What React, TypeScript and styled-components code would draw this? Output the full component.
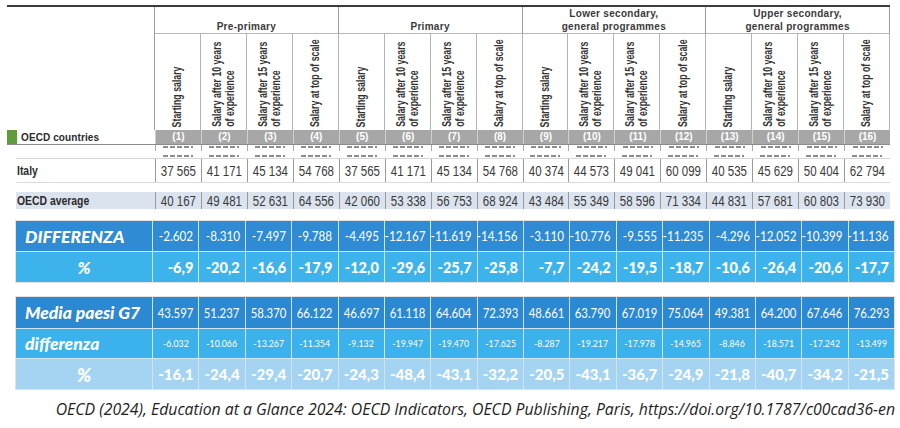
import styled, { createGlobalStyle } from "styled-components";

const GlobalStyle = createGlobalStyle`
  html, body {
    margin: 0;
    padding: 0;
    background: #ffffff;
  }
  body {
    width: 900px;
    height: 428px;
    overflow: hidden;
    font-family: "Liberation Sans", Arial, sans-serif;
  }
`;

const HEAD_COLS = "148px repeat(16, minmax(0, 1fr))";
const BODY_COLS = "139px repeat(16, minmax(0, 1fr))";

const groups = [
  "Pre-primary",
  "Primary",
  "Lower secondary,\ngeneral programmes",
  "Upper secondary,\ngeneral programmes",
];

const subHeads = [
  "Starting salary",
  "Salary after 10 years\nof experience",
  "Salary after 15 years\nof experience",
  "Salary at top of scale",
];

const italy = ["37 565", "41 171", "45 134", "54 768", "37 565", "41 171", "45 134", "54 768", "40 374", "44 573", "49 041", "60 099", "40 535", "45 629", "50 404", "62 794"];
const oecd = ["40 167", "49 481", "52 631", "64 556", "42 060", "53 338", "56 753", "68 924", "43 484", "55 349", "58 596", "71 334", "44 831", "57 681", "60 803", "73 930"];

const diff = ["-2.602", "-8.310", "-7.497", "-9.788", "-4.495", "-12.167", "-11.619", "-14.156", "-3.110", "-10.776", "-9.555", "-11.235", "-4.296", "-12.052", "-10.399", "-11.136"];
const diffPct = ["-6,9", "-20,2", "-16,6", "-17,9", "-12,0", "-29,6", "-25,7", "-25,8", "-7,7", "-24,2", "-19,5", "-18,7", "-10,6", "-26,4", "-20,6", "-17,7"];
const g7 = ["43.597", "51.237", "58.370", "66.122", "46.697", "61.118", "64.604", "72.393", "48.661", "63.790", "67.019", "75.064", "49.381", "64.200", "67.646", "76.293"];
const g7Diff = ["-6.032", "-10.066", "-13.267", "-11.354", "-9.132", "-19.947", "-19.470", "-17.625", "-8.287", "-19.217", "-17.978", "-14.965", "-8.846", "-18.571", "-17.242", "-13.499"];
const g7Pct = ["-16,1", "-24,4", "-29,4", "-20,7", "-24,3", "-48,4", "-43,1", "-32,2", "-20,5", "-43,1", "-36,7", "-24,9", "-21,8", "-40,7", "-34,2", "-21,5"];

const Page = styled.div`
  width: 900px;
  height: 428px;
  padding-top: 5px;
  box-sizing: border-box;
  display: flex;
  flex-direction: column;
`;

/* narrow type: the source table uses a condensed face we don't have */
const Squeeze = styled.span<{ $s: number; $o?: string }>`
  display: inline-block;
  white-space: nowrap;
  transform: scaleX(${(p) => p.$s});
  transform-origin: ${(p) => p.$o ?? "center"};
`;

/* ---------- OECD table ---------- */

const Table = styled.div`
  width: 883px;
  margin-left: 7px;
  border-top: 2px solid #3c3c3c;
`;

const HeadGrid = styled.div`
  display: grid;
  grid-template-columns: ${HEAD_COLS};
  grid-template-rows: 27px 96px;
`;

const Corner = styled.div`
  grid-row: 1 / 3;
  border-right: 1px solid #9c9c9c;
`;

const GroupCell = styled.div`
  grid-column: span 4;
  display: flex;
  align-items: flex-end;
  justify-content: center;
  white-space: pre-line;
  text-align: center;
  border-right: 1px solid #9c9c9c;
  border-bottom: 1px solid #b8b8b8;
  font-size: 10px;
  font-weight: bold;
  line-height: 12.5px;
  letter-spacing: 0.3px;
  color: #3a3a3a;
`;

const SubHead = styled.div`
  display: flex;
  align-items: flex-end;
  justify-content: center;
  padding-bottom: 3px;
  border-right: 1px solid #b4b4b4;
`;

/* rotated caption, squeezed along its length and kept on the cell's bottom edge */
const VText = styled.span`
  writing-mode: vertical-rl;
  white-space: pre;
  transform: translateY(13.5%) rotate(180deg) scaleY(0.73);
  font-size: 12px;
  font-weight: bold;
  line-height: 12.5px;
  color: #333333;
`;

const NumRow = styled.div`
  display: grid;
  grid-template-columns: ${HEAD_COLS};
  height: 14px;
  border-bottom: 1px solid #8c8c8c;
`;

const CountryLabel = styled.div`
  display: flex;
  align-items: center;
  gap: 4px;
  font-size: 10px;
  font-weight: bold;
  letter-spacing: 0.1px;
  color: #2a2a2a;
`;

const GreenBox = styled.span`
  width: 10px;
  height: 14px;
  background: #5f9c3b;
`;

const NumCell = styled.div`
  background: #a7a7a7;
  border-left: 1px solid #d0d0d0;
  color: #ffffff;
  font-size: 10px;
  font-weight: bold;
  line-height: 14px;
  text-align: center;
`;

/* rows of the source that are sliced away: only fragments of digits remain */
const SliceRow = styled.div<{ $h: number; $lines?: boolean }>`
  display: grid;
  grid-template-columns: ${BODY_COLS};
  margin-left: 9px;
  height: ${(p) => p.$h}px;
  & > * + * {
    border-left: ${(p) => (p.$lines ? "1px solid #a8a8a8" : "none")};
  }
`;

const SliceCell = styled.div<{ $y: number }>`
  display: flex;
  justify-content: center;
  padding-top: ${(p) => p.$y}px;
`;

const Fragment = styled.span`
  width: 30px;
  height: 2px;
  background: repeating-linear-gradient(90deg, #8c8c8c 0 5px, transparent 5px 7px);
`;

const DataRow = styled.div<{ $bg?: string; $h: number; $top?: number }>`
  display: grid;
  grid-template-columns: ${BODY_COLS};
  margin-left: 9px;
  margin-top: ${(p) => p.$top ?? 0}px;
  height: ${(p) => p.$h}px;
  background: ${(p) => p.$bg ?? "transparent"};
`;

const RowLabel = styled.div`
  display: flex;
  align-items: center;
  padding-left: 1px;
  font-size: 13px;
  font-weight: bold;
  color: #2c2c2c;
`;

const ValCell = styled.div`
  display: flex;
  align-items: center;
  justify-content: center;
  border-left: 1px solid #999999;
  font-size: 14px;
  color: #3a3a3a;
`;

const ItalyRow = styled(DataRow)`
  border-top: 1px solid #d6d6d6;
  border-bottom: 1px solid #dadada;
`;

/* ---------- blue comparison blocks ---------- */

const Block = styled.div<{ $top: number }>`
  margin: ${(p) => p.$top}px 0 0 16px;
  width: 878px;
  display: flex;
  flex-direction: column;
  gap: 1px;
  background: #cfe6f7;
  box-shadow: 0 0 0 1px #e2e2e2;
`;

const BlueRow = styled.div<{ $bg: string; $h: number }>`
  display: grid;
  grid-template-columns: 136px repeat(16, minmax(0, 1fr));
  gap: 1px;
  height: ${(p) => p.$h}px;
  & > * {
    background: ${(p) => p.$bg};
  }
`;

const BlueLabel = styled.div<{ $center?: boolean; $size: number }>`
  display: flex;
  align-items: center;
  justify-content: ${(p) => (p.$center ? "center" : "flex-start")};
  padding-left: ${(p) => (p.$center ? 0 : 9)}px;
  font-family: Lato, "Open Sans", sans-serif;
  font-size: ${(p) => p.$size}px;
  font-weight: 900;
  font-style: italic;
  color: #ffffff;
  white-space: nowrap;
`;

const BlueVal = styled.div<{ $size: number; $bold?: boolean; $center?: boolean }>`
  display: flex;
  align-items: center;
  justify-content: ${(p) => (p.$center ? "center" : "flex-end")};
  padding-right: ${(p) => (p.$center ? 0 : 5)}px;
  font-family: Lato, "Open Sans", sans-serif;
  font-size: ${(p) => p.$size}px;
  font-weight: ${(p) => (p.$bold ? 900 : 400)};
  color: #ffffff;
`;

const Source = styled.div`
  margin-top: 9px;
  padding-right: 5px;
  text-align: right;
  font-family: "Open Sans", Lato, sans-serif;
  font-style: italic;
  font-weight: 500;
  font-size: 15.8px;
  color: #1e1e1e;
  white-space: nowrap;
`;

function App() {
  const cols = italy.map((_, i) => i);
  return (
    <Page>
      <GlobalStyle />
      <Table>
        <HeadGrid>
          <Corner />
          {groups.map((g) => (
            <GroupCell key={g}>{g}</GroupCell>
          ))}
          {groups.flatMap((g) =>
            subHeads.map((s) => (
              <SubHead key={g + s}>
                <VText>{s}</VText>
              </SubHead>
            ))
          )}
        </HeadGrid>
        <NumRow>
          <CountryLabel>
            <GreenBox />
            OECD countries
          </CountryLabel>
          {cols.map((i) => (
            <NumCell key={i}>({i + 1})</NumCell>
          ))}
        </NumRow>

        <SliceRow $h={6} $lines>
          <div />
          {cols.map((i) => (
            <SliceCell key={i} $y={1}>
              <Fragment />
            </SliceCell>
          ))}
        </SliceRow>
        <SliceRow $h={7}>
          <div />
          {cols.map((i) => (
            <SliceCell key={i} $y={4}>
              <Fragment />
            </SliceCell>
          ))}
        </SliceRow>

        <ItalyRow $h={23}>
          <RowLabel>
            <Squeeze $s={0.8} $o="left">Italy</Squeeze>
          </RowLabel>
          {italy.map((v, i) => (
            <ValCell key={i}>
              <Squeeze $s={0.82}>{v}</Squeeze>
            </ValCell>
          ))}
        </ItalyRow>

        <DataRow $h={17} $bg="#dbe3ee" $top={9}>
          <RowLabel>
            <Squeeze $s={0.8} $o="left">OECD average</Squeeze>
          </RowLabel>
          {oecd.map((v, i) => (
            <ValCell key={i}>
              <Squeeze $s={0.82}>{v}</Squeeze>
            </ValCell>
          ))}
        </DataRow>
      </Table>

      <Block $top={12}>
        <BlueRow $bg="#2e8bd4" $h={30}>
          <BlueLabel $size={17.5}>DIFFERENZA</BlueLabel>
          {diff.map((v, i) => (
            <BlueVal key={i} $size={13}>
              <Squeeze $s={0.9} $o="right">{v}</Squeeze>
            </BlueVal>
          ))}
        </BlueRow>
        <BlueRow $bg="#3db3ec" $h={30}>
          <BlueLabel $size={17} $center>
            %
          </BlueLabel>
          {diffPct.map((v, i) => (
            <BlueVal key={i} $size={14.5} $bold>
              {v}
            </BlueVal>
          ))}
        </BlueRow>
      </Block>

      <Block $top={15}>
        <BlueRow $bg="#2b88d2" $h={31}>
          <BlueLabel $size={17.5}>Media paesi G7</BlueLabel>
          {g7.map((v, i) => (
            <BlueVal key={i} $size={13.5}>
              <Squeeze $s={0.84} $o="right">{v}</Squeeze>
            </BlueVal>
          ))}
        </BlueRow>
        <BlueRow $bg="#3cb2ec" $h={29}>
          <BlueLabel $size={17.5}>differenza</BlueLabel>
          {g7Diff.map((v, i) => (
            <BlueVal key={i} $size={9.5} $center>
              <Squeeze $s={0.92}>{v}</Squeeze>
            </BlueVal>
          ))}
        </BlueRow>
        <BlueRow $bg="#a4d4f1" $h={30}>
          <BlueLabel $size={19} $center>
            %
          </BlueLabel>
          {g7Pct.map((v, i) => (
            <BlueVal key={i} $size={15} $bold>
              {v}
            </BlueVal>
          ))}
        </BlueRow>
      </Block>

      <Source>
        OECD (2024), Education at a Glance 2024: OECD Indicators, OECD Publishing, Paris, https://doi.org/10.1787/c00cad36-en
      </Source>
    </Page>
  );
}

export default App;
